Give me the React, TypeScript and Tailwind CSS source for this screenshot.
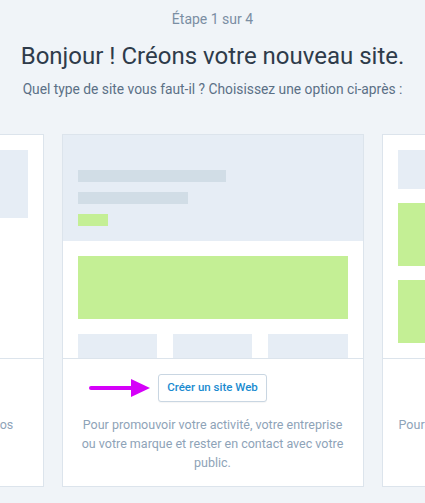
import React from 'react';

type Kind = 'left' | 'middle' | 'right';

const cards: { kind: Kind; text: string }[] = [
  {
    kind: 'left',
    text: 'Pour présenter votre portfolio et vos photos accompagnées de vos textes.',
  },
  {
    kind: 'middle',
    text: 'Pour promouvoir votre activité, votre entreprise ou votre marque et rester en contact avec votre public.',
  },
  {
    kind: 'right',
    text: 'Pour vendre vos produits et tous vos services en ligne, et gérer vos commandes.',
  },
];

function Preview({ kind }: { kind: Kind }) {
  if (kind === 'middle') {
    return (
      <div className="h-[223px] flex flex-col">
        <div className="h-[106px] bg-[#e6edf5] px-[15px] pt-[35px] flex flex-col gap-[10px]">
          <div className="h-[12px] w-[148px] bg-[#d1dde6]" />
          <div className="h-[12px] w-[110px] bg-[#d1dde6]" />
          <div className="h-[12px] w-[30px] bg-[#c4ef95]" />
        </div>
        <div className="flex-1 px-[15px] pt-[15px] flex flex-col">
          <div className="h-[63px] bg-[#c4ef95]" />
          <div className="mt-[15px] flex-1 grid grid-cols-3 gap-4">
            <div className="bg-[#e6edf5]" />
            <div className="bg-[#e6edf5]" />
            <div className="bg-[#e6edf5]" />
          </div>
        </div>
      </div>
    );
  }
  if (kind === 'left') {
    return (
      <div className="h-[223px] p-[15px]">
        <div className="h-[68px] w-[160px] ml-auto bg-[#e6edf5]" />
      </div>
    );
  }
  return (
    <div className="h-[223px] px-[15px] pt-[15px] flex flex-col">
      <div className="h-[39px] bg-[#e6edf5]" />
      <div className="mt-[14px] h-[63px] bg-[#c4ef95]" />
      <div className="mt-[14px] h-[63px] bg-[#c4ef95]" />
    </div>
  );
}

function Card({ kind, text }: { kind: Kind; text: string }) {
  return (
    <div className="w-[302px] shrink-0 bg-white border border-[#dce4ec] flex flex-col">
      <Preview kind={kind} />
      <div className="relative border-t border-[#dce4ec] px-[15px] pt-[15px] pb-[14px] flex flex-col items-center">
        {kind === 'middle' && (
          <svg
            className="absolute left-[26px] top-[20px]"
            width="62"
            height="18"
            viewBox="0 0 62 18"
          >
            <rect x="0" y="7" width="46" height="4" rx="2" fill="#d500f9" />
            <polygon points="42,0 61,9 42,18" fill="#d500f9" />
          </svg>
        )}
        <button className="h-[28px] px-[8px] rounded-[3px] border border-[#c9d6e2] bg-white text-[11.5px] font-medium text-[#1a8bd0] shadow-[0_1px_1px_rgba(0,0,0,0.04)]">
          Créer un site Web
        </button>
        <p className="mt-[13px] text-[12.5px] leading-[19px] text-[#8ea3b8] text-center">
          {text}
        </p>
      </div>
    </div>
  );
}

export default function App() {
  return (
    <div className="w-[425px] h-[503px] overflow-hidden bg-[#f0f4f8] pt-[9px] font-['Roboto',sans-serif]">
      <p className="text-center text-[14px] leading-[20px] text-[#7b8ea3]">Étape 1 sur 4</p>
      <h1 className="mt-[11px] text-center text-[24px] leading-[32px] text-[#2e3b4a]">
        Bonjour ! Créons votre nouveau site.
      </h1>
      <p className="mt-[7px] text-center text-[13.8px] leading-[20px] text-[#5b7086]">
        Quel type de site vous faut-il ? Choisissez une option ci-après :
      </p>
      <div className="mt-[35px] flex justify-center gap-[18px]">
        {cards.map((c) => (
          <Card key={c.kind} kind={c.kind} text={c.text} />
        ))}
      </div>
    </div>
  );
}
